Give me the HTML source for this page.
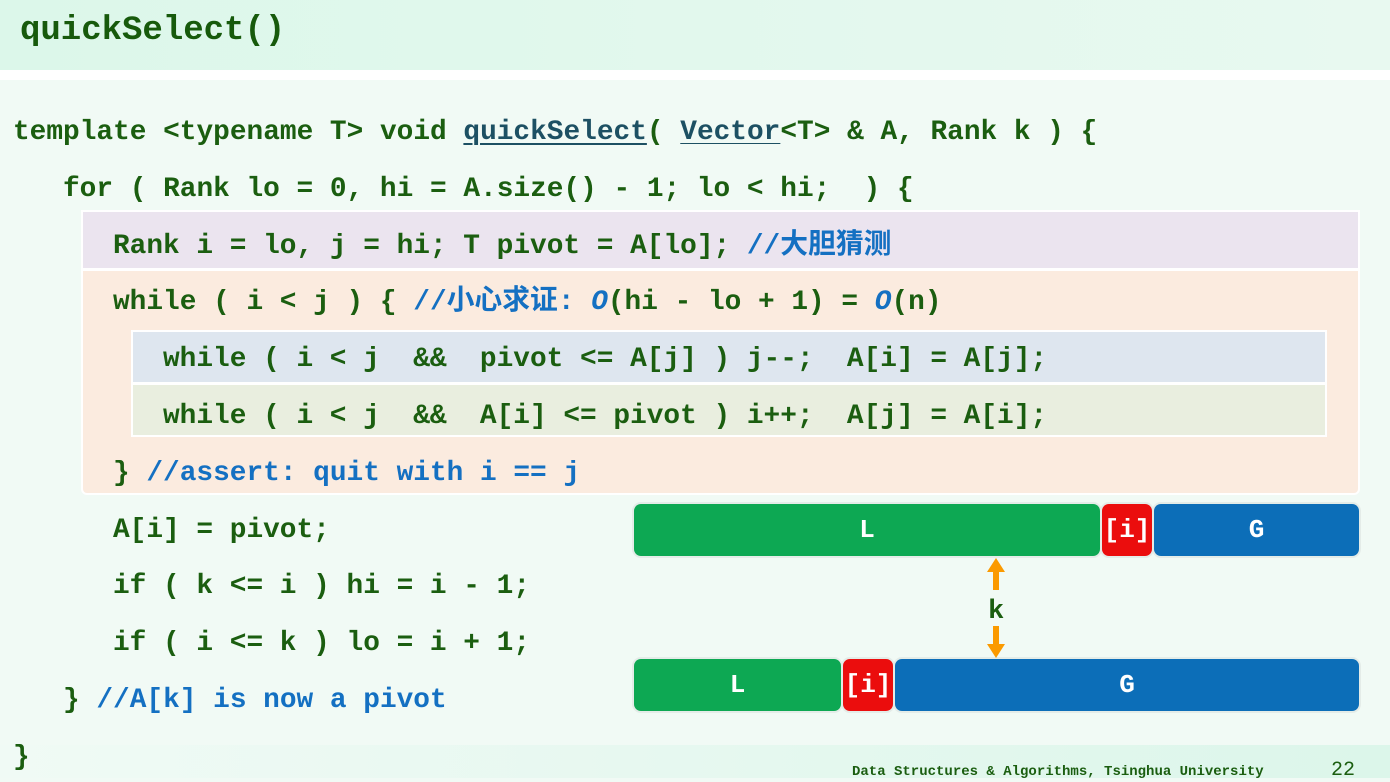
<!DOCTYPE html><html><head><meta charset="utf-8"><style>
body{margin:0;width:1390px;height:778px;overflow:hidden;background:#f1faf5;position:relative;font-family:"Liberation Mono","Noto Sans CJK SC",monospace;font-weight:bold;color:#1b5e10}
.hdr{position:absolute;left:0;top:0;width:1390px;height:70px;background:linear-gradient(90deg,#dcf7ea,#e8f9f0)}
.wh{position:absolute;left:0;top:70px;width:1390px;height:10px;background:#fff}
.ftr{position:absolute;left:0;top:745px;width:1390px;height:33px;background:linear-gradient(90deg,#f0faf5,#dcf6ea)}
.t{position:absolute;left:20px;top:12px;font-size:34px;color:#175a0c}
.l{position:absolute;font-size:27.8px;white-space:pre;line-height:34px}
.c{color:#1470c2}
.u{color:#1d5063;text-decoration:underline;text-decoration-thickness:2px;text-underline-offset:4px}
.b{position:absolute;border:2px solid #fff;box-sizing:border-box}
.bar{position:absolute;border-radius:7px;color:#fff;font-size:26px;display:flex;align-items:center;justify-content:center;box-shadow:0 0 0 2px #e4ece8}
.G{background:#0da853}.B{background:#0c6eb8}.R{background:#eb0d0d}
</style></head><body>
<div class="hdr"></div><div class="wh"></div><div class="ftr"></div>
<div class="t">quickSelect()</div>
<div class="b" style="left:81px;top:210px;width:1279px;height:60px;background:#ebe4ef"></div>
<div class="b" style="left:81px;top:269px;width:1279px;height:226px;background:#fbebdf;border-radius:0 0 6px 6px"></div>
<div class="b" style="left:131px;top:330px;width:1196px;height:54px;background:#dee6ef"></div>
<div class="b" style="left:131px;top:383px;width:1196px;height:54px;background:#e9eedf"></div>
<div class="l" style="left:13px;top:116px">template &lt;typename T&gt; void <span class="u">quickSelect</span>( <span class="u" style="text-decoration-thickness:1px">Vector</span>&lt;T&gt; &amp; A, Rank k ) {</div>
<div class="l" style="left:63px;top:173px">for ( Rank lo = 0, hi = A.size() - 1; lo &lt; hi;  ) {</div>
<div class="l" style="left:113px;top:230px">Rank i = lo, j = hi; T pivot = A[lo]; <span class="c">//大胆猜测</span></div>
<div class="l" style="left:113px;top:286px">while ( i &lt; j ) { <span class="c">//小心求证: <i>O</i></span>(hi - lo + 1) = <span class="c"><i>O</i></span>(n)</div>
<div class="l" style="left:163px;top:343px">while ( i &lt; j  &amp;&amp;  pivot &lt;= A[j] ) j--;  A[i] = A[j];</div>
<div class="l" style="left:163px;top:400px">while ( i &lt; j  &amp;&amp;  A[i] &lt;= pivot ) i++;  A[j] = A[i];</div>
<div class="l" style="left:113px;top:457px">} <span class="c">//assert: quit with i == j</span></div>
<div class="l" style="left:113px;top:514px">A[i] = pivot;</div>
<div class="l" style="left:113px;top:570px">if ( k &lt;= i ) hi = i - 1;</div>
<div class="l" style="left:113px;top:627px">if ( i &lt;= k ) lo = i + 1;</div>
<div class="l" style="left:63px;top:684px">} <span class="c">//A[k] is now a pivot</span></div>
<div class="l" style="left:13px;top:741px">}</div>
<div class="bar G" style="left:634px;top:504px;width:466px;height:52px">L</div>
<div class="bar R" style="left:1102px;top:504px;width:50px;height:52px">[i]</div>
<div class="bar B" style="left:1154px;top:504px;width:205px;height:52px">G</div>
<div class="bar G" style="left:634px;top:659px;width:207px;height:52px">L</div>
<div class="bar R" style="left:843px;top:659px;width:50px;height:52px">[i]</div>
<div class="bar B" style="left:895px;top:659px;width:464px;height:52px">G</div>
<svg style="position:absolute;left:980px;top:556px" width="34" height="104"><path d="M16 2 L7 16 H13 V34 H19 V16 H25 Z" fill="#fb9a00"/><path d="M16 102 L7 88 H13 V70 H19 V88 H25 Z" fill="#fb9a00"/></svg>
<div class="l" style="left:988px;top:595px;font-size:27px">k</div>
<div style="position:absolute;left:852px;top:764px;font-size:14px;color:#1b5e10">Data Structures &amp; Algorithms, Tsinghua University</div>
<div style="position:absolute;left:1331px;top:759px;font-size:20px;font-weight:normal;color:#1b5e10">22</div>
</body></html>
